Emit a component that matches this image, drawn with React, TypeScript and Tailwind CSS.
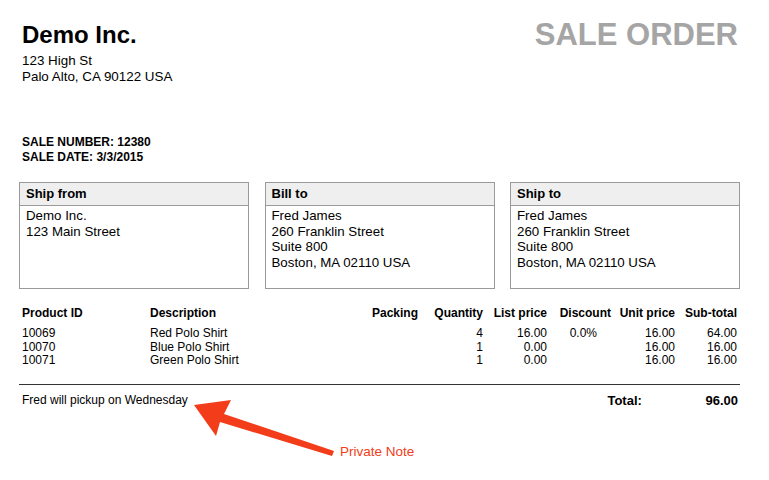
import React from 'react';

const font = { fontFamily: '"Liberation Sans", Arial, sans-serif' };

const Box = ({ title, lines }: { title: string; lines: string[] }) => (
  <div className="w-[230px] h-[107px] border border-[#9a9a9a]">
    <div className="h-[23px] bg-[#efefef] border-b border-[#9a9a9a] px-[6px] flex items-center text-[13px] font-bold text-black">{title}</div>
    <div className="px-[6px] pt-[2px] text-[13.3px] leading-[15.5px] text-black">
      {lines.map((l) => <div key={l}>{l}</div>)}
    </div>
  </div>
);

const rows = [
  ['10069', 'Red Polo Shirt', '', '4', '16.00', '0.0%', '16.00', '64.00'],
  ['10070', 'Blue Polo Shirt', '', '1', '0.00', '', '16.00', '16.00'],
  ['10071', 'Green Polo Shirt', '', '1', '0.00', '', '16.00', '16.00'],
];
const cols = 'grid grid-cols-[128px_150px_118px_65px_64px_64px_64px_62px]';

export default function App() {
  return (
    <div className="relative w-[769px] h-[480px] bg-white pl-[22px] pr-[31px] text-black" style={font}>
      <div className="flex justify-between pt-[20px]">
        <div>
          <div className="text-[24px] font-bold leading-[30px]">Demo Inc.</div>
          <div className="text-[13.4px] leading-[16px] mt-[3px]">123 High St</div>
          <div className="text-[13.4px] leading-[16px]">Palo Alto, CA 90122 USA</div>
        </div>
        <div className="text-[31px] font-bold text-[#a5a5a5] leading-[34px] mt-[-2px]">SALE ORDER</div>
      </div>
      <div className="mt-[50px] text-[12px] font-bold leading-[15px]">
        <div>SALE NUMBER: 12380</div>
        <div>SALE DATE: 3/3/2015</div>
      </div>
      <div className="flex justify-between ml-[-3px] mr-[-2px] mt-[17px]">
        <Box title="Ship from" lines={['Demo Inc.', '123 Main Street']} />
        <Box title="Bill to" lines={['Fred James', '260 Franklin Street', 'Suite 800', 'Boston, MA 02110 USA']} />
        <Box title="Ship to" lines={['Fred James', '260 Franklin Street', 'Suite 800', 'Boston, MA 02110 USA']} />
      </div>
      <div className="mt-[17px] text-[12px]">
        <div className={`${cols} font-bold leading-[15px] ml-[-3px] pl-[3px] mr-[-2px] pr-[2px]`}>
          <div>Product ID</div>
          <div>Description</div>
          <div className="text-right">Packing</div>
          <div className="text-right">Quantity</div>
          <div className="text-right">List price</div>
          <div className="text-right">Discount</div>
          <div className="text-right">Unit price</div>
          <div className="text-right">Sub-total</div>
        </div>
        <div className="pt-[6px] pb-[16px] border-b border-[#333] ml-[-3px] pl-[3px] mr-[-2px] pr-[2px]">
          {rows.map((r) => (
            <div key={r[0]} className={`${cols} leading-[13.5px]`}>
              <div>{r[0]}</div>
              <div>{r[1]}</div>
              <div className="text-right">{r[2]}</div>
              <div className="text-right">{r[3]}</div>
              <div className="text-right">{r[4]}</div>
              <div className="text-right pr-[14px]">{r[5]}</div>
              <div className="text-right">{r[6]}</div>
              <div className="text-right">{r[7]}</div>
            </div>
          ))}
        </div>
        <div className="flex items-center mt-[8px] leading-[15px]">
          <div className="flex-1">Fred will pickup on Wednesday</div>
          <div className="font-bold text-[13px] w-[40px] mr-[58px]">Total:</div>
          <div className="font-bold text-[13px]">96.00</div>
        </div>
      </div>
      <svg className="absolute left-0 top-0" width="769" height="480">
        <polygon points="194,405 231,400 224,414 334,451 332,456 220,422 216,436" fill="#f23c1a" />
      </svg>
      <div className="absolute left-[340px] top-[442px] text-[13.5px] text-[#f23c1a]">Private Note</div>
    </div>
  );
}
